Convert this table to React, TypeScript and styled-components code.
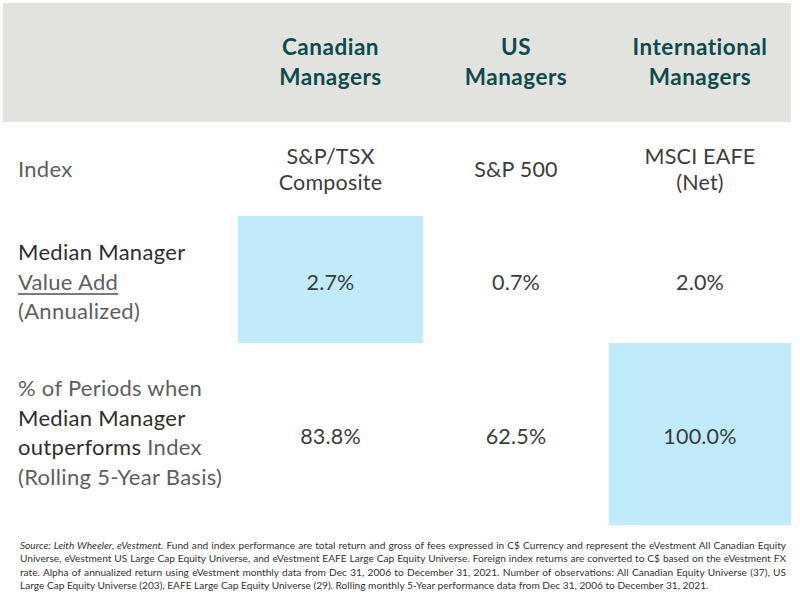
import React from "react";
import styled, { createGlobalStyle } from "styled-components";

const Global = createGlobalStyle`
  html, body { margin: 0; padding: 0; background: #ffffff; }
  body { font-family: Lato, "Open Sans", sans-serif; }
`;

const Page = styled.div`
  width: 800px;
  height: 600px;
  padding: 3px 9px 0 3px;
  box-sizing: border-box;
  display: flex;
  flex-direction: column;
`;

const Table = styled.div`
  display: grid;
  grid-template-columns: 235px 185px 186px 182px;
  grid-template-rows: 119px 94px 127px 182px;
`;

const HeadCell = styled.div`
  background: #e2e2de;
  display: flex;
  align-items: center;
  justify-content: center;
  text-align: center;
  padding-bottom: 2px;
  box-sizing: border-box;
  color: #0e4b51;
  font-weight: 700;
  font-size: 22.5px;
  letter-spacing: 0.5px;
  line-height: 30px;
`;

/* $shift > 0 nudges the text down, < 0 nudges it up */
const Label = styled.div<{ $shift?: number }>`
  display: flex;
  flex-direction: column;
  justify-content: center;
  padding-left: 15px;
  padding-top: ${(p) => Math.max(p.$shift ?? 0, 0)}px;
  padding-bottom: ${(p) => Math.max(-(p.$shift ?? 0), 0)}px;
  box-sizing: border-box;
  color: #5e5e5e;
  font-size: 22px;
  letter-spacing: 0.3px;
  line-height: 29.5px;

  strong {
    color: #2e2e2e;
    font-weight: 400;
  }
  u {
    text-decoration-color: #7a7a7a;
    text-underline-offset: 3px;
  }
`;

const Value = styled.div<{ $hi?: boolean; $pad?: number }>`
  display: flex;
  align-items: center;
  justify-content: center;
  text-align: center;
  padding-top: ${(p) => p.$pad ?? 0}px;
  box-sizing: border-box;
  background: ${(p) => (p.$hi ? "#bfebfb" : "transparent")};
  color: #3c3c3c;
  font-size: 21.5px;
  letter-spacing: 0.2px;
  line-height: 26px;
`;

const Foot = styled.p`
  margin: 14px 0 0 17px;
  width: 766px;
  font-size: 10.15px;
  line-height: 13.3px;
  color: #333333;
  text-align: justify;

  em {
    font-style: italic;
    margin-right: 3px;
  }
`;

export default function App() {
  return (
    <>
      <Global />
      <Page>
        <Table>
          <HeadCell />
          <HeadCell>Canadian<br />Managers</HeadCell>
          <HeadCell>US<br />Managers</HeadCell>
          <HeadCell>International<br />Managers</HeadCell>

          <Label>Index</Label>
          <Value>S&amp;P/TSX<br />Composite</Value>
          <Value>S&amp;P 500</Value>
          <Value>MSCI EAFE<br />(Net)</Value>

          <Label $shift={4}>
            <strong>Median Manager</strong>
            <span><u>Value Add</u></span>
            <span>(Annualized)</span>
          </Label>
          <Value $hi $pad={4}>2.7%</Value>
          <Value $pad={4}>0.7%</Value>
          <Value $pad={4}>2.0%</Value>

          <Label $shift={-4}>
            <span>% of Periods when</span>
            <strong>Median Manager</strong>
            <span><strong>outperforms</strong> Index</span>
            <span>(Rolling 5-Year Basis)</span>
          </Label>
          <Value $pad={4}>83.8%</Value>
          <Value $pad={4}>62.5%</Value>
          <Value $hi $pad={4}>100.0%</Value>
        </Table>
        <Foot>
          <em>Source: Leith Wheeler, eVestment.</em>Fund and index performance are total return and gross of fees expressed in C$ Currency and represent the eVestment All Canadian Equity Universe, eVestment US Large Cap Equity Universe, and eVestment EAFE Large Cap Equity Universe. Foreign index returns are converted to C$ based on the eVestment FX rate. Alpha of annualized return using eVestment monthly data from Dec 31, 2006 to December 31, 2021. Number of observations: All Canadian Equity Universe (37), US Large Cap Equity Universe (203), EAFE Large Cap Equity Universe (29). Rolling monthly 5-Year performance data from Dec 31, 2006 to December 31, 2021.
        </Foot>
      </Page>
    </>
  );
}
